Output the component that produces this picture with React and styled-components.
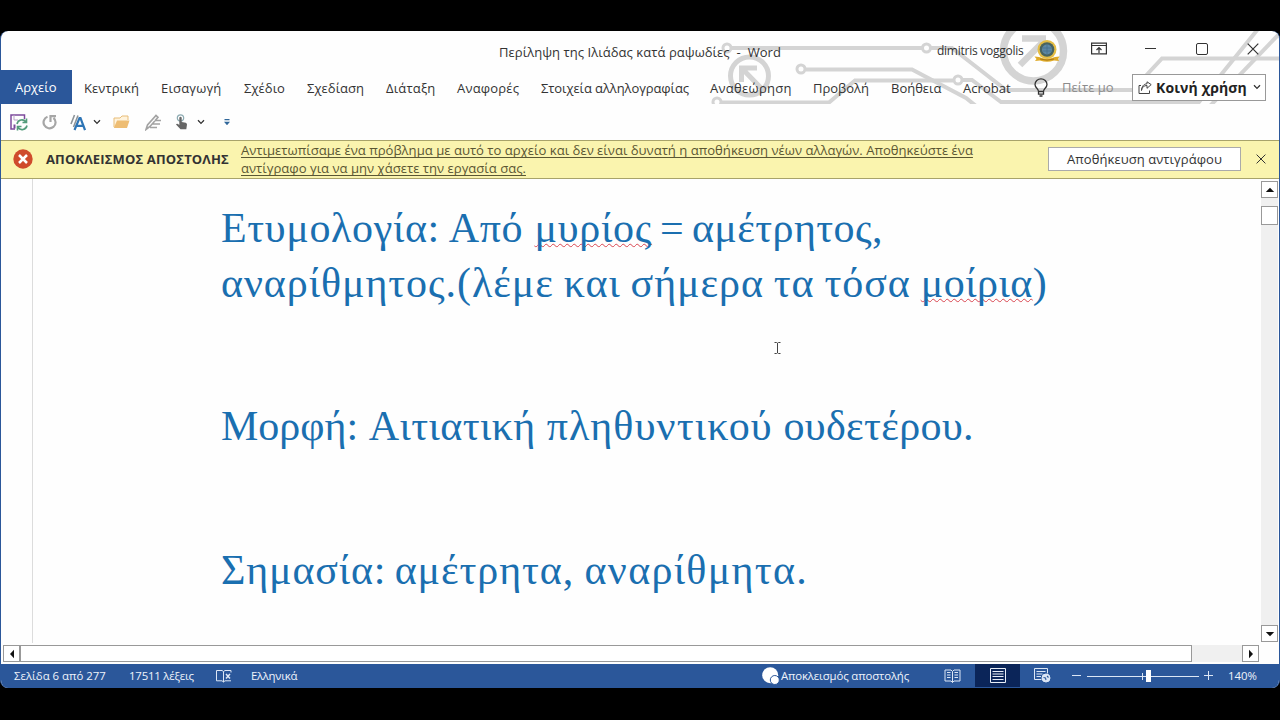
import styled, { createGlobalStyle, css } from "styled-components";

const tabs = [
  { label: "Κεντρική", width: 77, spacing: 0.08 },
  { label: "Εισαγωγή", width: 83, spacing: 0.2 },
  { label: "Σχέδιο", width: 63, spacing: 0.05 },
  { label: "Σχεδίαση", width: 79, spacing: 0.05 },
  { label: "Διάταξη", width: 71, spacing: 0.2 },
  { label: "Αναφορές", width: 84, spacing: 0.2 },
  { label: "Στοιχεία αλληλογραφίας", width: 169, spacing: -0.08 },
  { label: "Αναθεώρηση", width: 103, spacing: 0.3 },
  { label: "Προβολή", width: 78, spacing: 0 },
  { label: "Βοήθεια", width: 72, spacing: 0 },
  { label: "Acrobat", width: 71, spacing: 0.05 },
];

const ChevronIcon = () => (
  <svg width="8" height="6" viewBox="0 0 8 6" fill="none" stroke="#333" strokeWidth="1.3">
    <path d="M1 1.2 4 4.4 7 1.2" />
  </svg>
);

const CloseIcon = ({ size = 12 }) => (
  <svg width={size} height={size} viewBox="0 0 12 12" stroke="#333" strokeWidth="1.2">
    <path d="M.7.7l10.6 10.6M11.3.7.7 11.3" />
  </svg>
);

const Circuit = () => (
  <CircuitSvg viewBox="700 31 579 73" fill="none" stroke="#d4d4d4" strokeWidth="4">
    <circle cx="727" cy="48" r="4" strokeWidth="3" />
    <path d="M732 48H922" />
    <circle cx="926.5" cy="48" r="4" strokeWidth="3" />
    <path d="M931 48h21l54 42h126" />
    <circle cx="801" cy="69" r="4" strokeWidth="3" />
    <path d="M806 69.500H912L966 98l10 8" />
    <circle cx="717" cy="102" r="4" strokeWidth="3" />
    <path d="M722 102.500H829L855 80.500H953" />
    <circle cx="958" cy="80" r="4" strokeWidth="3" />
    <path d="M962 80h10l29 22h198l59-73" />
    <path d="M1210 106 1281 32" />
    <path d="M1140 82 1162 58.500H1280" />
    <circle cx="749.500" cy="76" r="19" strokeWidth="5" />
    <path d="M757 68H741.500V82M742 68.500 761 88" strokeWidth="5" />
    <circle cx="1033.500" cy="51" r="30" strokeWidth="7.500" />
    <path d="M1022 38.500H1046M1045 40 1020 65" strokeWidth="6.500" />
  </CircuitSvg>
);

const CrestIcon = () => (
  <svg width="26" height="24" viewBox="0 0 26 24">
    <circle cx="13" cy="10.500" r="9.500" fill="#e4bd45" />
    <circle cx="13" cy="10.500" r="7.300" fill="#49635f" />
    <circle cx="13" cy="10.500" r="5" fill="#5c87a5" />
    <path d="M8.500 9h9M9 12h8M13 6v9" stroke="#46708c" strokeWidth=".8" />
    <path d="M.5 17.500 5 18q8 3.500 16 0l4.500-.5-1.500 2.500 1 2-5-.5q-7 2.500-14 0l-5 .5 1.500-2z" fill="#dfaa29" />
    <path d="M6 20q7 2.200 14 0" stroke="#a97817" fill="none" />
  </svg>
);

const RibbonDisplayIcon = () => (
  <svg width="16" height="13" viewBox="0 0 16 13" fill="none" stroke="#333" strokeWidth="1.200">
    <path d="M.6 1.200h14.800v10.600H.6zM.6 3.500h14.800M8 11V5.800M5.500 8 8 5.600 10.500 8" />
  </svg>
);

const BulbIcon = () => (
  <svg width="14" height="19" viewBox="0 0 14 19" fill="none" stroke="#333" strokeWidth="1.300">
    <path d="M4.500 13.500C4.500 10.500 1 10 1 6.500a6 5.700 0 0 1 12 0c0 3.500-3.500 4-3.500 7zM4.500 13.500v2.700h5v-2.700M5.500 18h3" />
  </svg>
);

const ShareIcon = () => (
  <svg width="14" height="13" viewBox="0 0 14 13" fill="none" stroke="#444" strokeWidth="1">
    <path d="M3 4.500H1v8h10.500V9.500M3.500 9.500C4 6 6 4.500 9 4.500V7.300l4.200-3.700L9 .8v2C5.500 3 3.700 5.500 3.500 9.500z" />
  </svg>
);

const SaveIcon = () => (
  <svg width="18" height="17" viewBox="0 0 18 17" fill="none">
    <path d="M5 15H1V1h13.500v4" stroke="#7c4a9c" strokeWidth="1.500" />
    <path d="M4 1v5h4" stroke="#b9a3c7" />
    <path d="M4.500 10.500v4" stroke="#7c4a9c" strokeWidth="2" />
    <path d="M7 10a5 5 0 0 1 9-2M16.500 4.500V8.500H12.500M17 11.500a5 5 0 0 1-9 2M7.500 16.500v-4h4" stroke="#549c7b" strokeWidth="1.600" />
  </svg>
);

const RedoIcon = () => (
  <svg width="15" height="16" viewBox="0 0 15 16" fill="none" stroke="#a6a6a6" strokeWidth="2.200">
    <path d="M5.500 2.700A6 6 0 1 0 11.500 3.800M8.500 8V2.100H14" />
  </svg>
);

const StylesIcon = () => (
  <svg width="16" height="17" viewBox="0 0 16 17" fill="none">
    <path d="M1 10 4.500 1M3.500 13 8 1.500" stroke="#8d9499" strokeWidth="1.600" />
    <path d="M4.500 16 9.500 4h1l4.500 12M6.500 11.800H13" stroke="#2e75b6" strokeWidth="2.200" />
  </svg>
);

const FolderIcon = () => (
  <svg width="17" height="14" viewBox="0 0 17 14">
    <path d="M1 12V3h6l2-2h6v4" fill="#fff3dc" stroke="#e8bd79" />
    <path d="M.8 13 4 5.500h12.500L14 13z" fill="#eebd73" />
  </svg>
);

const EditorIcon = () => (
  <svg width="17" height="17" viewBox="0 0 17 17" fill="none" stroke="#a3a3a3" strokeWidth="1.600">
    <path d="M1 15.500 2.500 11 11 1.500l2 1.800-8 9.200zM9.500 6.500H16M7.500 10H15M5 13.500h7" />
  </svg>
);

const TouchIcon = () => (
  <svg width="13" height="16" viewBox="0 0 13 16">
    <circle cx="5.500" cy="4" r="3.200" fill="none" stroke="#8dabb2" strokeWidth="1.200" />
    <path d="M4.300 4a1.200 1.200 0 0 1 2.400 0v4l4 .8q1.300.4 1.300 1.700l-.7 4.800H5.500L1 10.500q.7-1.300 2-.5l1.300 1z" fill="#666" />
  </svg>
);

const CustomizeIcon = () => (
  <svg width="6" height="7" viewBox="0 0 6 7" fill="#30679a">
    <path d="M.5 0h5v1.200h-5zM0 2.800h6L3 6.200z" />
  </svg>
);

const ErrorIcon = () => (
  <svg width="20" height="20" viewBox="0 0 20 20">
    <circle cx="10" cy="10" r="9.700" fill="#cf4b2c" />
    <path d="m6 6 8 8M14 6l-8 8" stroke="#fff" strokeWidth="2.500" />
  </svg>
);

const ProofIcon = () => (
  <svg width="16" height="14" viewBox="0 0 16 14" fill="none" stroke="#dce6f5">
    <path d="M7.500 2.500V13M7.500 2.500 6 1.500H.5v10.300H6l1.500 1.200 1.500-1.200h6M7.500 2.500 9 1.500h6v2" />
    <path d="m10 5 4 4.500M14 5l-4 4.500" strokeWidth="1.500" />
  </svg>
);

const SyncIcon = () => (
  <svg width="18" height="18" viewBox="0 0 18 18">
    <circle cx="8.200" cy="8.200" r="8" fill="#fff" />
    <circle cx="12.800" cy="13" r="4.500" fill="#fff" stroke="#2b579a" />
  </svg>
);

const ReadIcon = () => (
  <svg width="17" height="14" viewBox="0 0 17 14" fill="none" stroke="#dce6f5">
    <path d="M8.500 2.500V13.500M8.500 2.500 7 1H1v11h6l1.500 1.500L10 12h6V1h-6zM3 3.500h3.500M3 6h3.500M3 8.500h3.500M10.500 3.500H14M10.500 6H14M10.500 8.500H14" />
  </svg>
);

const PrintLayoutIcon = () => (
  <svg width="16" height="15" viewBox="0 0 16 15" fill="none" stroke="#e8eef8">
    <path d="M.5.5h15v14H.5zM2.500 3.500h11M2.500 6h11M2.500 8.500h11M2.500 11.500h11" />
  </svg>
);

const WebIcon = () => (
  <svg width="17" height="15" viewBox="0 0 17 15" fill="none" stroke="#dce6f5">
    <path d="M7.500 11.500H.5V.5h13v5M2.500 3.500h9M2.500 6h6M2.500 8.500h4.500" />
    <circle cx="12" cy="10" r="4" fill="#dce6f5" />
    <path d="m9.500 9.500 2 .5.500 2M13 8l1.500 1.500" stroke="#2b579a" strokeWidth="1.100" />
  </svg>
);

const Arrow = ({ d }) => (
  <svg width="10" height="10" viewBox="0 0 10 10" fill="#111">
    <path d={d} />
  </svg>
);

const App = () => (
  <>
    <GlobalStyle />
    <Screen>
      <WordWindow>
        <Header>
          <Circuit />
          <TitleBar>
            <DocTitle>Περίληψη της Ιλιάδας κατά ραψωδίες&nbsp; -&nbsp; Word</DocTitle>
            <UserName>dimitris voggolis</UserName>
            <CrestIcon />
            <WindowControls>
              <RibbonDisplayIcon />
              <Minimize />
              <Maximize />
              <CloseIcon />
            </WindowControls>
          </TitleBar>
          <TabBar>
            <FileTab>Αρχείο</FileTab>
            {tabs.map((tab) => (
              <Tab key={tab.label} $width={tab.width} $spacing={tab.spacing}>
                {tab.label}
              </Tab>
            ))}
            <BulbIcon />
            <TellMe>Πείτε μο</TellMe>
            <ShareButton>
              <ShareIcon />
              <span>Κοινή χρήση</span>
              <ChevronIcon />
            </ShareButton>
          </TabBar>
        </Header>
        <QuickAccess>
          <Tool $width={32}><SaveIcon /></Tool>
          <Tool $width={28}><RedoIcon /></Tool>
          <Tool $width={23}><StylesIcon /></Tool>
          <Tool $width={20}><ChevronIcon /></Tool>
          <Tool $width={32}><FolderIcon /></Tool>
          <Tool $width={30}><EditorIcon /></Tool>
          <Tool $width={22}><TouchIcon /></Tool>
          <Tool $width={27}><ChevronIcon /></Tool>
          <CustomizeIcon />
        </QuickAccess>
        <MessageBar>
          <ErrorIcon />
          <MessageTitle>ΑΠΟΚΛΕΙΣΜΟΣ ΑΠΟΣΤΟΛΗΣ</MessageTitle>
          <MessageText>
            Αντιμετωπίσαμε ένα πρόβλημα με αυτό το αρχείο και δεν είναι δυνατή η αποθήκευση νέων αλλαγών. Αποθηκεύστε ένα
            <br />
            αντίγραφο για να μην χάσετε την εργασία σας.
          </MessageText>
          <SaveCopyButton>Αποθήκευση αντιγράφου</SaveCopyButton>
          <CloseIcon size={10} />
        </MessageBar>
        <Workspace>
          <Ruler />
          <Page>
            <Paragraph>
              <Run $spacing={0.65}>Ετυμολογία: Από </Run>
              <Run $spacing={0.75} $misspelled>μυρίος</Run>
              <Run $spacing={0.4} $gap={-3}> = αμέτρητος,</Run>
              <br />
              <Run $spacing={0.93} $gap={-1.5}>αναρίθμητος.(λέμε και σήμερα τα τόσα </Run>
              <Run $spacing={0.5} $misspelled>μοίρια</Run>
              <Run $spacing={-1}>)</Run>
            </Paragraph>
            <Paragraph>
              <Run $spacing={0}>Μορφή: </Run>
              <Run $spacing={0.44}>Αιτιατική </Run>
              <Run $spacing={1.16} $gap={-1}>πληθυντικού </Run>
              <Run $spacing={0.35}>ουδετέρου.</Run>
            </Paragraph>
            <Paragraph>
              <Run $spacing={0.85} $gap={-3}>Σημασία: </Run>
              <Run $spacing={0.9} $gap={-1}>αμέτρητα, </Run>
              <Run $spacing={1.3}>αναρίθμητα.</Run>
            </Paragraph>
            <TextCursor viewBox="0 0 7 12" fill="none" stroke="#444">
              <path d="M.5.500H2.500l1 .7 1-.7h2M3.500 1v10M.5 11.500h2l1-.7 1 .7h2" />
            </TextCursor>
          </Page>
          <VerticalScroll>
            <ScrollButton><Arrow d="M5 2.800 9.200 7H.8z" /></ScrollButton>
            <VerticalThumb />
            <ScrollButton><Arrow d="M5 7.200 9.200 3H.8z" /></ScrollButton>
          </VerticalScroll>
        </Workspace>
        <HorizontalScroll>
          <ScrollButton><Arrow d="M3 5 7 .8v8.400z" /></ScrollButton>
          <HorizontalThumb />
          <ScrollButton><Arrow d="M7 5 3 .8v8.400z" /></ScrollButton>
        </HorizontalScroll>
        <StatusBar>
          <StatusItem $width={115}>Σελίδα 6 από 277</StatusItem>
          <StatusItem $width={87} $spacing={-0.2}>17511 λέξεις</StatusItem>
          <StatusItem $width={35}><ProofIcon /></StatusItem>
          <StatusItem $width={511} $spacing={-0.3}>Ελληνικά</StatusItem>
          <StatusItem $width={19}><SyncIcon /></StatusItem>
          <StatusItem $width={149} $spacing={-0.15}>Αποκλεισμός αποστολής</StatusItem>
          <ViewButton><ReadIcon /></ViewButton>
          <ViewButton $active><PrintLayoutIcon /></ViewButton>
          <ViewButton><WebIcon /></ViewButton>
          <Zoom>
            <svg width="138" height="14" viewBox="0 0 138 14" stroke="#dce6f5">
              <path d="M0 6.500h9M15 7.500h112M70.500 4v7M132 6.500h9" />
              <path d="M76.500 1v12" stroke="#fff" strokeWidth="5" />
              <path d="M136.500 2v9" />
            </svg>
          </Zoom>
          <ZoomLevel>140%</ZoomLevel>
        </StatusBar>
      </WordWindow>
    </Screen>
  </>
);

const GlobalStyle = createGlobalStyle`
  * {
    box-sizing: border-box;
  }

  body {
    margin: 0;
    background: #000;
    overflow: hidden;
  }

  svg {
    display: block;
    flex-shrink: 0;
  }
`;

const Screen = styled.div`
  width: 1280px;
  height: 720px;
  padding-top: 31px;
  background: #000;
  font-family: "Open Sans", "Noto Sans", sans-serif;
  font-size: 13px;
  color: #333;
`;

const WordWindow = styled.main`
  display: flex;
  flex-direction: column;
  height: 657px;
  border: solid #2b579a;
  border-width: 0 1px;
  border-radius: 8px;
  background: #fefefe;
  overflow: hidden;
`;

const Header = styled.header`
  position: relative;
  height: 73px;
  flex-shrink: 0;
`;

const CircuitSvg = styled.svg`
  position: absolute;
  top: 0;
  right: 0;
  width: 579px;
  height: 73px;
`;

const TitleBar = styled.div`
  position: relative;
  display: flex;
  align-items: center;
  height: 39px;
  padding-left: 498px;
  white-space: nowrap;
`;

const DocTitle = styled.div`
  width: 438px;
  padding-top: 3px;
  letter-spacing: 0.06px;
`;

const UserName = styled.div`
  width: 97px;
  font-size: 12px;
  letter-spacing: -0.25px;
`;

const WindowControls = styled.div`
  display: flex;
  align-items: center;
  margin-left: 31px;
  padding-bottom: 4px;

  svg:last-child {
    margin-left: 39px;
  }
`;

const Minimize = styled.span`
  width: 11px;
  height: 1px;
  margin-left: 38px;
  background: #333;
`;

const Maximize = styled.span`
  width: 12px;
  height: 12px;
  margin-left: 40px;
  border: 1.3px solid #333;
  border-radius: 2px;
`;

const TabBar = styled.nav`
  position: relative;
  display: flex;
  align-items: center;
  height: 34px;
  white-space: nowrap;
`;

const FileTab = styled.div`
  width: 71px;
  height: 34px;
  margin-right: 12px;
  padding-left: 14px;
  background: #2b579a;
  color: #fff;
  line-height: 34px;
`;

const Tab = styled.div`
  width: ${({ $width }) => $width}px;
  flex-shrink: 0;
  padding-top: 1px;
  letter-spacing: ${({ $spacing }) => $spacing}px;
`;

const TellMe = styled.div`
  width: 70px;
  margin-left: 14px;
  color: #8c8c8c;
`;

const ShareButton = styled.div`
  display: flex;
  align-items: center;
  width: 134px;
  height: 27px;
  padding: 0 4px 0 5px;
  border: 1px solid #999;
  background: #fff;
  color: #222;
  font-size: 14px;
  font-weight: 700;

  span {
    width: 103px;
    padding-left: 4px;
    letter-spacing: 0.15px;
  }
`;

const QuickAccess = styled.div`
  display: flex;
  align-items: center;
  height: 36px;
  flex-shrink: 0;
  padding-left: 9px;
`;

const Tool = styled.div`
  width: ${({ $width }) => $width}px;
`;

const MessageBar = styled.div`
  display: flex;
  align-items: center;
  height: 39px;
  flex-shrink: 0;
  padding: 0 0 1px 12px;
  border: solid #a8a36a;
  border-width: 1px 0;
  background: #faf4ae;
  white-space: nowrap;
`;

const MessageTitle = styled.div`
  width: 208px;
  padding-left: 13px;
  font-weight: 700;
  letter-spacing: 0.15px;
`;

const MessageText = styled.div`
  width: 807px;
  color: #5a5633;
  font-size: 13.1px;
  line-height: 18px;
  text-decoration: underline;
  text-decoration-skip-ink: none;
  text-underline-offset: 2px;
`;

const SaveCopyButton = styled.div`
  width: 193px;
  height: 24px;
  margin-right: 15px;
  border: 1px solid #aaa;
  background: #fff;
  line-height: 22px;
  text-align: center;
  letter-spacing: 0.07px;
`;

const Workspace = styled.div`
  display: flex;
  height: 464px;
  flex-shrink: 0;
`;

const Ruler = styled.div`
  width: 32px;
  border-right: 1px solid #dcdcdc;
`;

const Page = styled.article`
  position: relative;
  flex: 1;
  padding: 21.5px 0 0 188px;
  color: #1a6fb0;
  font-family: "Liberation Serif", serif;
  font-size: 42px;
  line-height: 55px;
`;

const Paragraph = styled.p`
  margin: 0 0 88.5px;
  white-space: pre;
`;

const Run = styled.span`
  letter-spacing: ${({ $spacing }) => $spacing}px;
  word-spacing: ${({ $gap = 0 }) => $gap}px;
  ${({ $misspelled }) =>
    $misspelled &&
    css`
      text-decoration: underline wavy #d9454f 1px;
      text-decoration-skip-ink: none;
      text-underline-offset: 1px;
    `}
`;

const TextCursor = styled.svg`
  position: absolute;
  top: 163px;
  left: 741px;
  width: 7px;
  height: 12px;
`;

const VerticalScroll = styled.div`
  display: flex;
  flex-direction: column;
  width: 17px;
  margin: 2px 1px 1px 0;
  background: #f0f0f0;
`;

const ScrollButton = styled.div`
  display: flex;
  align-items: center;
  justify-content: center;
  width: 17px;
  height: 17px;
  flex-shrink: 0;
  border: 1px solid #999;
  background: #fff;
`;

const VerticalThumb = styled.div`
  height: 19px;
  margin: 8px 0 auto;
  border: 1px solid #999;
  background: #fff;
`;

const HorizontalScroll = styled.div`
  display: flex;
  width: 1256px;
  height: 17px;
  margin: 2px 0 2px 2px;
  flex-shrink: 0;
  background: #f0f0f0;
`;

const HorizontalThumb = styled.div`
  width: 1172px;
  margin-right: auto;
  border: 1px solid #999;
  background: #fff;
`;

const StatusBar = styled.footer`
  display: flex;
  align-items: center;
  flex: 1;
  padding: 0 0 1px 13px;
  background: #2b579a;
  color: #eef3fb;
  font-size: 11.4px;
  white-space: nowrap;
`;

const StatusItem = styled.div`
  width: ${({ $width }) => $width}px;
  flex-shrink: 0;
  letter-spacing: ${({ $spacing = 0 }) => $spacing}px;
`;

const ViewButton = styled.div`
  display: flex;
  align-items: center;
  justify-content: center;
  width: 45px;
  height: 100%;
  background: ${({ $active }) => ($active ? "#0b2559" : "transparent")};
`;

const Zoom = styled.div`
  margin-left: 7px;

  svg {
    overflow: visible;
  }
`;

const ZoomLevel = styled.div`
  margin-left: 18px;
`;

export default App;
